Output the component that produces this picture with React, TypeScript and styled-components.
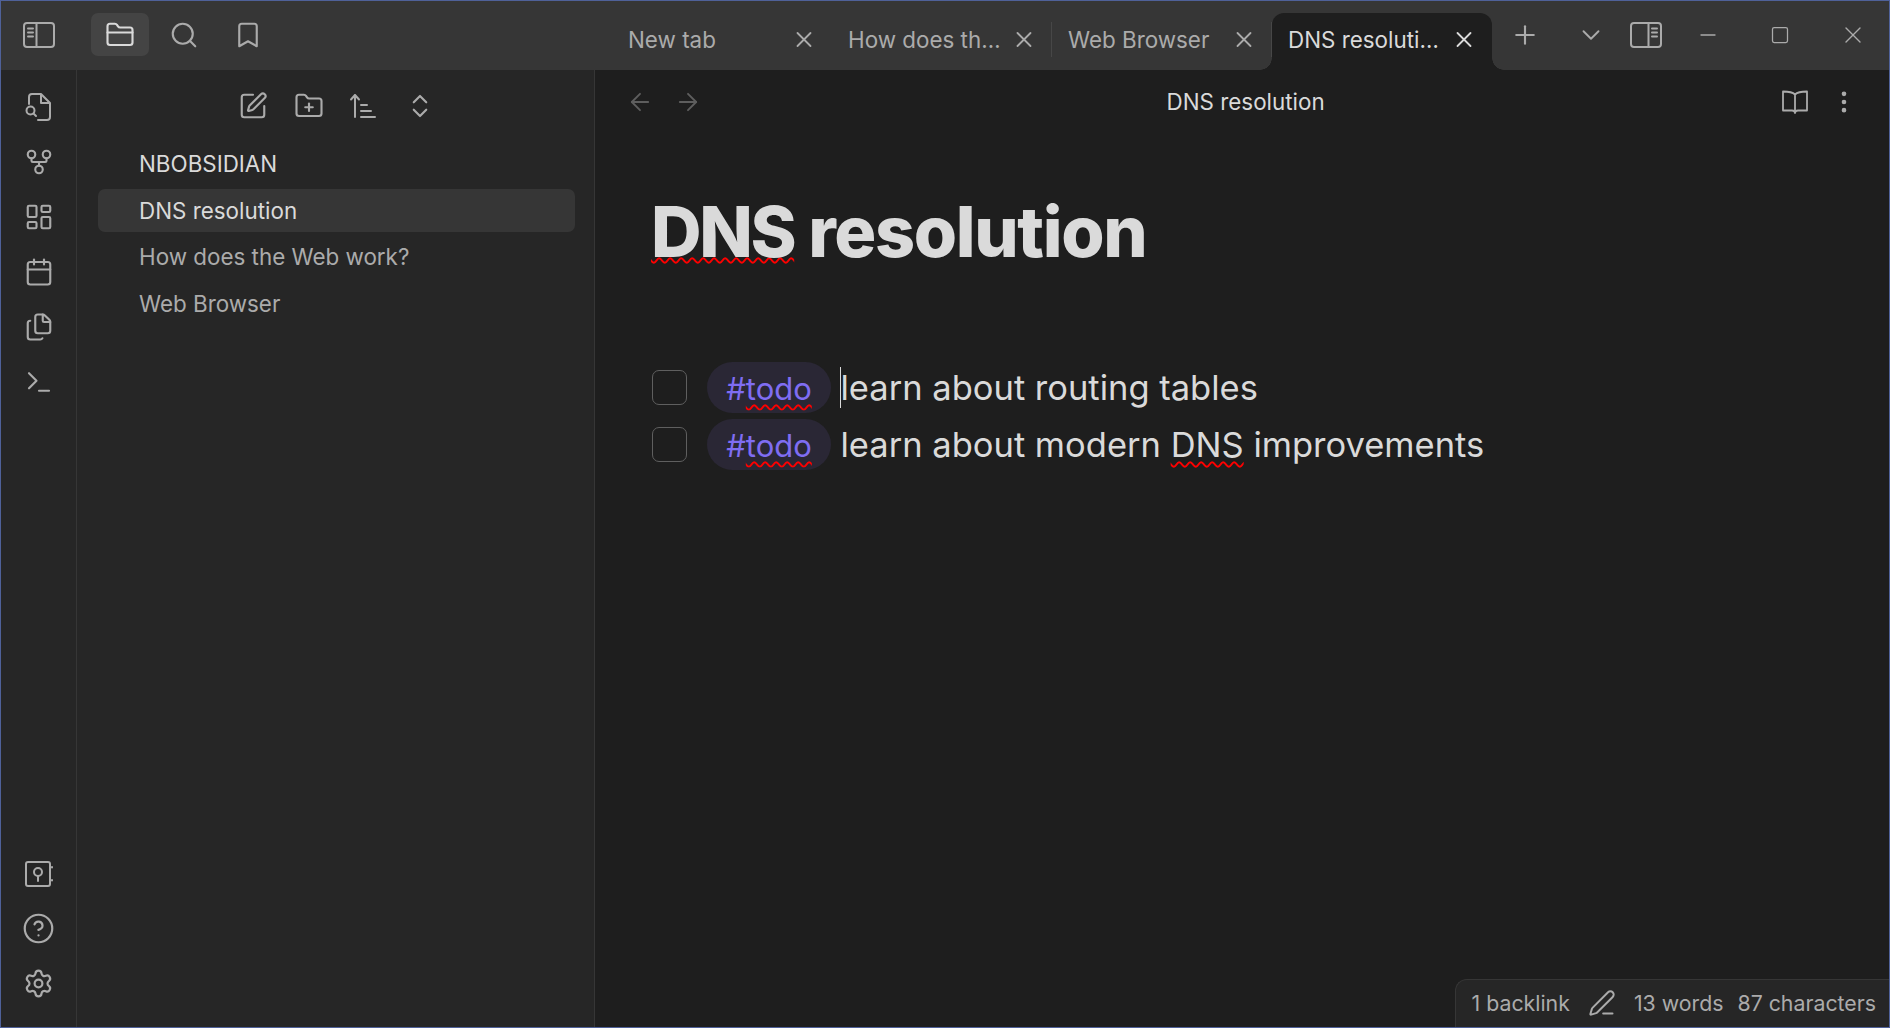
import styled, { createGlobalStyle } from "styled-components";
import {
  ArrowLeft,
  ArrowRight,
  Calendar,
  ChevronDown,
  ChevronsUpDown,
  CircleHelp,
  EllipsisVertical,
  Files,
  FolderClosed,
  FolderPlus,
  GitFork,
  LayoutDashboard,
  Minus,
  PenLine,
  Plus,
  Search,
  Settings,
  Bookmark,
  Square,
  SquarePen,
  Terminal,
  X,
} from "lucide-react";

const GlobalStyle = createGlobalStyle`
  html, body {
    margin: 0;
    padding: 0;
    background: #1e1e1e;
  }
  * {
    box-sizing: border-box;
  }
`;

const Window = styled.div`
  width: 1890px;
  height: 1028px;
  border: 1px solid #4f6199;
  display: flex;
  flex-direction: column;
  overflow: hidden;
  font-family: Inter, "Liberation Sans", sans-serif;
  color: #dadada;
`;

const TitleBar = styled.div`
  height: 69px;
  flex: none;
  display: flex;
  background: #363636;
`;

const LeftDock = styled.div`
  width: 611px;
  flex: none;
  display: flex;
  align-items: center;
  padding-left: 9px;
  padding-bottom: 2px;
`;

const DockButton = styled.div<{ $active?: boolean }>`
  width: 58px;
  height: 43px;
  display: flex;
  align-items: center;
  justify-content: center;
  margin-right: 6px;
  border-radius: 7px;
  background: ${(props) => (props.$active ? "#444444" : "transparent")};
  color: ${(props) => (props.$active ? "#dadada" : "#ababab")};
`;

const DockNav = styled.div`
  display: flex;
  margin-left: 17px;
`;

const TabStrip = styled.div`
  display: flex;
  padding-top: 12px;
`;

const Tab = styled.div<{ $active?: boolean; $divider?: boolean }>`
  width: 220px;
  height: 57px;
  position: relative;
  display: flex;
  align-items: center;
  padding: 0 15px 4px 16px;
  gap: 8px;
  font-size: 22.4px;
  color: ${(props) => (props.$active ? "#dadada" : "#ababab")};
  background: ${(props) => (props.$active ? "#1e1e1e" : "transparent")};
  border-radius: ${(props) => (props.$active ? "12px 12px 0 0" : "0")};
  &::before {
    content: "";
    display: ${(props) => (props.$divider ? "block" : "none")};
    position: absolute;
    right: 0;
    top: 9px;
    width: 1px;
    height: 35px;
    background: #474747;
  }
  ${(props) =>
    props.$active &&
    `
    &::after {
      content: "";
      position: absolute;
      right: -12px;
      bottom: 0;
      width: 12px;
      height: 12px;
      background: radial-gradient(circle at 100% 0, transparent 11.5px, #1e1e1e 12px);
    }
    &::before {
      content: "";
      display: block;
      position: absolute;
      left: -12px;
      top: auto;
      right: auto;
      bottom: 0;
      width: 12px;
      height: 12px;
      background: radial-gradient(circle at 0 0, transparent 11.5px, #1e1e1e 12px);
    }
  `}
`;

const TabTitle = styled.span`
  flex: 1;
  min-width: 0;
  white-space: nowrap;
  overflow: hidden;
  text-overflow: ellipsis;
`;

const TabClose = styled.span`
  flex: none;
  width: 26px;
  display: flex;
  justify-content: center;
`;

const BarButton = styled.div<{ $width: number }>`
  width: ${(props) => props.$width}px;
  display: flex;
  align-items: center;
  justify-content: center;
  color: #ababab;
  padding-bottom: 2px;
`;

const WindowControls = styled.div`
  margin-left: auto;
  display: flex;
`;

const Body = styled.div`
  flex: 1;
  min-height: 0;
  display: flex;
`;

const Ribbon = styled.nav`
  width: 76px;
  flex: none;
  display: flex;
  flex-direction: column;
  justify-content: space-between;
  padding: 9px 0 16px;
  background: #262626;
  border-right: 1px solid #363636;
`;

const RibbonGroup = styled.div`
  display: flex;
  flex-direction: column;
`;

const RibbonItem = styled.div`
  height: 55px;
  display: flex;
  align-items: center;
  justify-content: center;
  color: #ababab;
`;

const Sidebar = styled.aside`
  width: 518px;
  flex: none;
  padding: 8px 19px 0 21px;
  background: #262626;
  border-right: 1px solid #363636;
`;

const SidebarNav = styled.div`
  height: 55px;
  display: flex;
  justify-content: center;
  align-items: center;
  margin-bottom: 9px;
`;

const SidebarNavButton = styled.div`
  width: 55.5px;
  display: flex;
  justify-content: center;
  color: #ababab;
`;

const FileRow = styled.div<{ $active?: boolean; $root?: boolean }>`
  height: 43px;
  margin-bottom: 3.5px;
  padding-left: 41px;
  display: flex;
  align-items: center;
  font-size: 22.4px;
  border-radius: 7px;
  background: ${(props) => (props.$active ? "#363636" : "transparent")};
  color: ${(props) => (props.$active || props.$root ? "#dadada" : "#ababab")};
`;

const Editor = styled.main`
  flex: 1;
  min-width: 0;
  position: relative;
  background: #1e1e1e;
`;

const EditorHeader = styled.div`
  height: 63px;
  display: flex;
  align-items: center;
  padding: 0 31.4px 0 31px;
`;

const HeaderNav = styled.div`
  width: 110px;
  display: flex;
  gap: 20px;
  color: #5e5e5e;
`;

const HeaderTitle = styled.div`
  flex: 1;
  text-align: center;
  font-size: 22.4px;
  margin-right: 26px;
`;

const HeaderActions = styled.div`
  display: flex;
  align-items: center;
  gap: 20.4px;
  color: #ababab;
`;

const Content = styled.div`
  padding: 0 56px;
`;

const Heading = styled.h1`
  margin: 0;
  padding-top: 56px;
  height: 226px;
  font-size: 70px;
  line-height: 85px;
  font-weight: 800;
  letter-spacing: -1.35px;
  color: #dadada;
  white-space: nowrap;
`;

const Misspelled = styled.span<{ $offset: number }>`
  text-decoration: underline wavy #ff0000;
  text-decoration-thickness: 1.5px;
  text-underline-offset: ${(props) => props.$offset}px;
  text-decoration-skip-ink: none;
`;

const HeadingWord = styled(Misspelled)`
  letter-spacing: -2.4px;
`;

const TaskRow = styled.div`
  height: 57px;
  display: flex;
  align-items: center;
  font-size: 34.5px;
  white-space: nowrap;
`;

const Checkbox = styled.span`
  width: 35px;
  height: 35px;
  flex: none;
  margin-left: 1px;
  margin-right: 20px;
  border: 1.5px solid #5f5f5f;
  border-radius: 7px;
`;

const Tag = styled.span`
  width: 124px;
  height: 51px;
  flex: none;
  margin-right: 9.5px;
  padding-top: 1px;
  display: flex;
  align-items: center;
  justify-content: center;
  border-radius: 26px;
  font-size: 31px;
  background: #2a2735;
  color: #7f6df2;
`;

const TaskText = styled.span`
  position: relative;
`;

const Caret = styled.span`
  position: absolute;
  left: -1px;
  top: 0;
  width: 1px;
  height: 41px;
  background: #dadada;
`;

const StatusBar = styled.div`
  position: absolute;
  right: 0;
  bottom: 0;
  height: 48px;
  display: flex;
  align-items: center;
  gap: 14px;
  padding: 0 13px 1px 16px;
  font-size: 21.3px;
  color: #ababab;
  background: #262626;
  border: 1px solid #363636;
  border-width: 1px 0 0 1px;
  border-radius: 12px 0 0 0;
`;

const StatusPen = styled.span`
  display: flex;
  margin: 0 4px;
`;

const SidebarToggleIcon = ({ flip }: { flip?: boolean }) => (
  <svg
    width="32"
    height="26"
    viewBox="0 0 32 26"
    fill="none"
    stroke="currentColor"
    strokeWidth="2"
    strokeLinecap="round"
    style={flip ? { transform: "scaleX(-1)" } : undefined}
  >
    <rect x="1" y="1" width="30" height="24" rx="3" />
    <path d="M13.5 1v24M5 6.5h5M5 10.5h5M5 14.5h5" />
  </svg>
);

const FileSearchIcon = () => (
  <svg
    width="30"
    height="30"
    viewBox="0 0 30 30"
    fill="none"
    stroke="currentColor"
    strokeWidth="2"
    strokeLinecap="round"
    strokeLinejoin="round"
  >
    <path d="M5 12V5a3 3 0 0 1 3-3h9l9 9v14a3 3 0 0 1-3 3h-9M17 2v9h9" />
    <circle cx="6.5" cy="18.5" r="4" />
    <path d="m9.5 21.5 2.5 2.5" />
  </svg>
);

const VaultIcon = () => (
  <svg
    width="30"
    height="30"
    viewBox="0 0 30 30"
    fill="none"
    stroke="currentColor"
    strokeWidth="2"
    strokeLinecap="round"
  >
    <rect x="2" y="3" width="24" height="24" rx="2" />
    <circle cx="14" cy="13" r="4" />
    <path d="M14 17v5M28 8v.5M28 21v.5" />
  </svg>
);

const SortIcon = () => (
  <svg
    width="30"
    height="30"
    viewBox="0 0 30 30"
    fill="none"
    stroke="currentColor"
    strokeWidth="2"
    strokeLinecap="round"
    strokeLinejoin="round"
  >
    <path d="M6 26V4M2 8.5 6 4l4 4.5M12 14h6M12 20h10M12 26h14" />
  </svg>
);

const ReadingIcon = () => (
  <svg
    width="28"
    height="28"
    viewBox="0 0 28 28"
    fill="none"
    stroke="currentColor"
    strokeWidth="1.8"
    strokeLinejoin="round"
  >
    <path d="M14 6.5C12 4.5 10 3.5 2 3.5v19h9c1.5 0 3 .8 3 2.5 0-1.7 1.5-2.5 3-2.5h9v-19c-8 0-10 1-12 3ZM14 6.5V25" />
  </svg>
);

const ribbonTop = [GitFork, LayoutDashboard, Calendar, Files, Terminal];
const tabs = [
  { title: "New tab", divider: false },
  { title: "How does the Web work?", divider: true },
  { title: "Web Browser", divider: true },
];

function App() {
  return (
    <Window>
      <GlobalStyle />
      <TitleBar>
        <LeftDock>
          <DockButton>
            <SidebarToggleIcon />
          </DockButton>
          <DockNav>
            <DockButton $active>
              <FolderClosed size={30} strokeWidth={1.7} />
            </DockButton>
            <DockButton>
              <Search size={30} strokeWidth={1.7} />
            </DockButton>
            <DockButton>
              <Bookmark size={30} strokeWidth={1.7} />
            </DockButton>
          </DockNav>
        </LeftDock>
        <TabStrip>
          {tabs.map((tab) => (
            <Tab key={tab.title} $divider={tab.divider}>
              <TabTitle>{tab.title}</TabTitle>
              <TabClose>
                <X size={27} strokeWidth={1.7} />
              </TabClose>
            </Tab>
          ))}
          <Tab $active>
            <TabTitle>DNS resolution</TabTitle>
            <TabClose>
              <X size={27} strokeWidth={1.7} />
            </TabClose>
          </Tab>
        </TabStrip>
        <BarButton $width={65}>
          <Plus size={30} strokeWidth={1.7} />
        </BarButton>
        <BarButton $width={67}>
          <ChevronDown size={30} strokeWidth={1.5} />
        </BarButton>
        <BarButton $width={43}>
          <SidebarToggleIcon flip />
        </BarButton>
        <WindowControls>
          <BarButton $width={72.5}>
            <Minus size={24} strokeWidth={1.3} />
          </BarButton>
          <BarButton $width={72.5}>
            <Square size={20} strokeWidth={1.5} />
          </BarButton>
          <BarButton $width={72.5}>
            <X size={28} strokeWidth={1.2} />
          </BarButton>
        </WindowControls>
      </TitleBar>
      <Body>
        <Ribbon>
          <RibbonGroup>
            <RibbonItem>
              <FileSearchIcon />
            </RibbonItem>
            {ribbonTop.map((Icon, i) => (
              <RibbonItem key={i}>
                <Icon size={30} strokeWidth={1.7} />
              </RibbonItem>
            ))}
          </RibbonGroup>
          <RibbonGroup>
            <RibbonItem>
              <VaultIcon />
            </RibbonItem>
            <RibbonItem>
              <CircleHelp size={33} strokeWidth={1.6} />
            </RibbonItem>
            <RibbonItem>
              <Settings size={31} strokeWidth={1.7} />
            </RibbonItem>
          </RibbonGroup>
        </Ribbon>
        <Sidebar>
          <SidebarNav>
            <SidebarNavButton>
              <SquarePen size={30} strokeWidth={1.7} />
            </SidebarNavButton>
            <SidebarNavButton>
              <FolderPlus size={30} strokeWidth={1.7} />
            </SidebarNavButton>
            <SidebarNavButton>
              <SortIcon />
            </SidebarNavButton>
            <SidebarNavButton>
              <ChevronsUpDown size={30} strokeWidth={1.7} />
            </SidebarNavButton>
          </SidebarNav>
          <FileRow $root>NBOBSIDIAN</FileRow>
          <FileRow $active>DNS resolution</FileRow>
          <FileRow>How does the Web work?</FileRow>
          <FileRow>Web Browser</FileRow>
        </Sidebar>
        <Editor>
          <EditorHeader>
            <HeaderNav>
              <ArrowLeft size={28} strokeWidth={1.6} />
              <ArrowRight size={28} strokeWidth={1.6} />
            </HeaderNav>
            <HeaderTitle>DNS resolution</HeaderTitle>
            <HeaderActions>
              <ReadingIcon />
              <EllipsisVertical size={28} strokeWidth={2} />
            </HeaderActions>
          </EditorHeader>
          <Content>
            <Heading>
              <HeadingWord $offset={0}>DNS</HeadingWord> resolution
            </Heading>
            <TaskRow>
              <Checkbox />
              <Tag>
                #<Misspelled $offset={4}>todo</Misspelled>
              </Tag>
              <TaskText>
                <Caret />
                learn about routing tables
              </TaskText>
            </TaskRow>
            <TaskRow>
              <Checkbox />
              <Tag>
                #<Misspelled $offset={4}>todo</Misspelled>
              </Tag>
              <TaskText>
                learn about modern <Misspelled $offset={4}>DNS</Misspelled>{" "}
                improvements
              </TaskText>
            </TaskRow>
          </Content>
          <StatusBar>
            <span>1 backlink</span>
            <StatusPen>
              <PenLine size={28} strokeWidth={1.7} />
            </StatusPen>
            <span>13 words</span>
            <span>87 characters</span>
          </StatusBar>
        </Editor>
      </Body>
    </Window>
  );
}

export default App;
